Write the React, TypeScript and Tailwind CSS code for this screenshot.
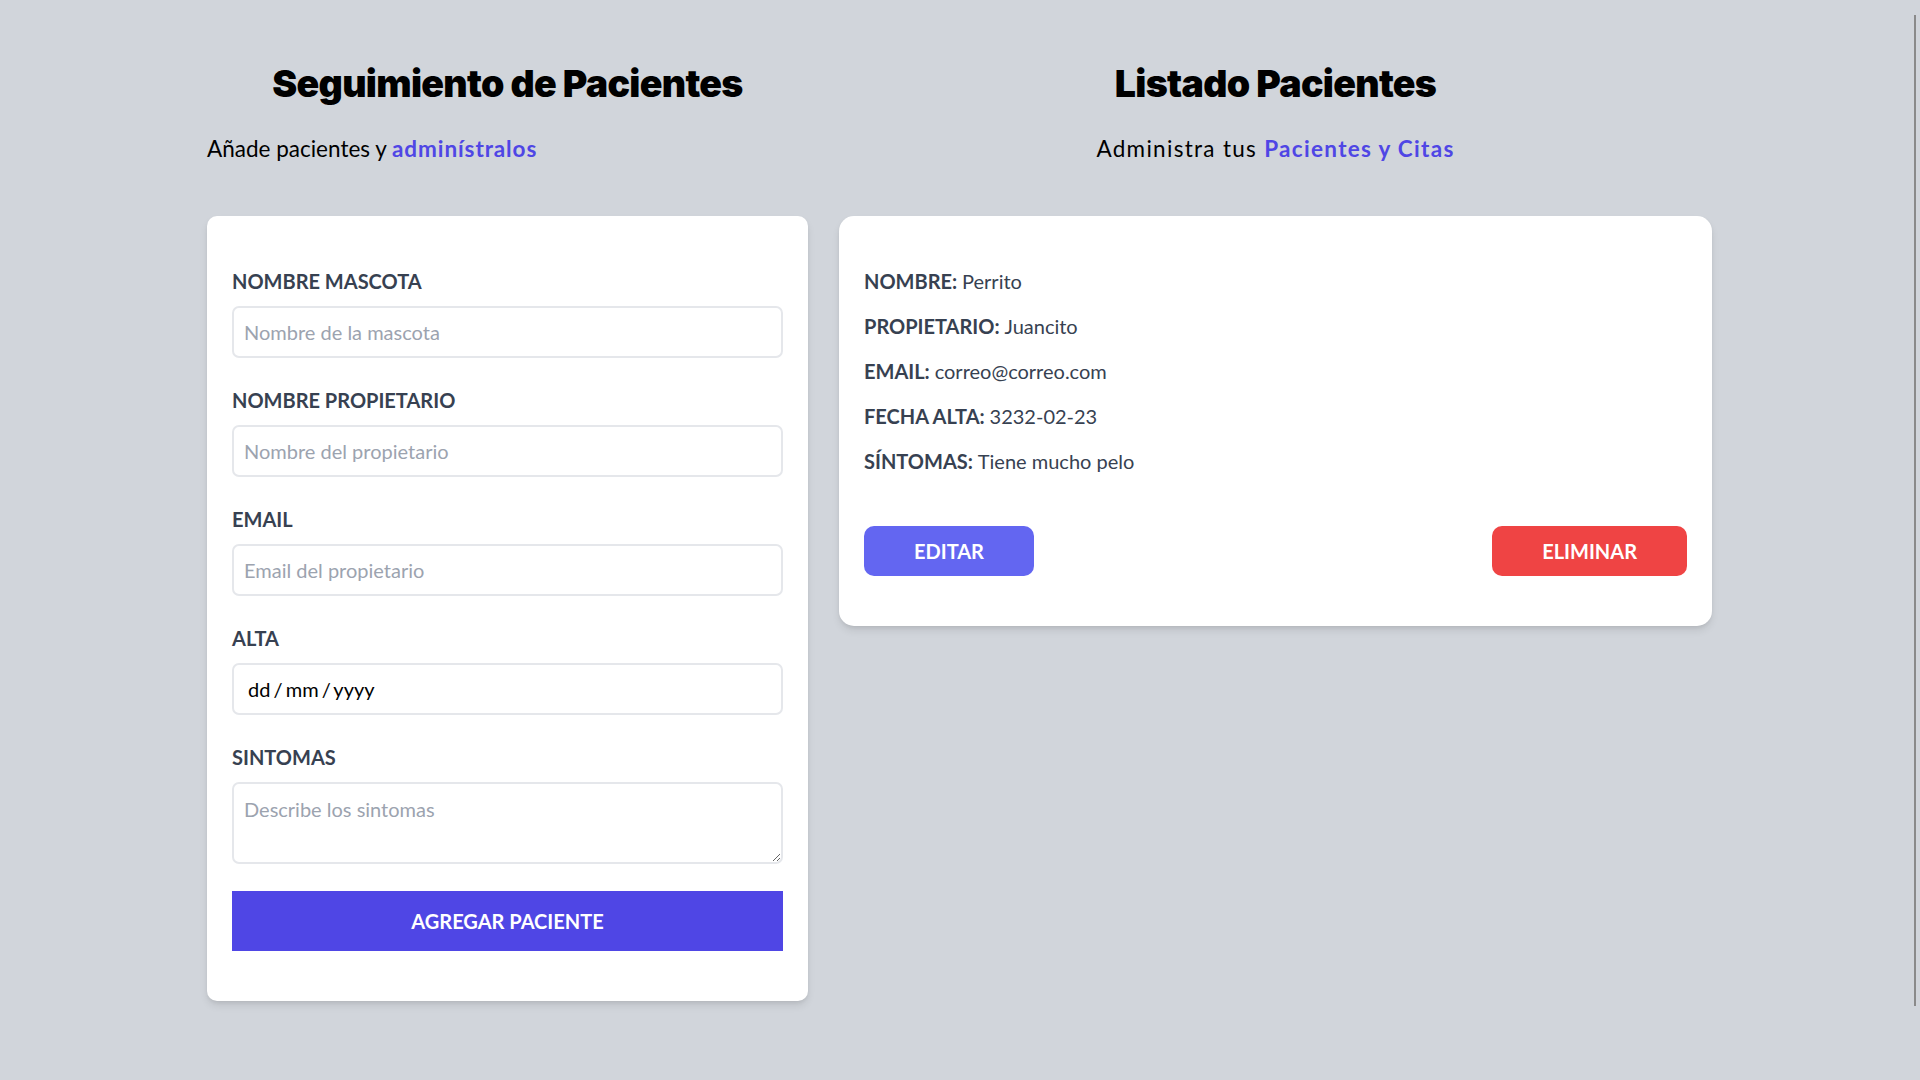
import React from "react";

function Field({ label, children }: { label: string; children: React.ReactNode }) {
  return (
    <div className="mb-[27px]">
      <label className="block text-[20px] leading-[30px] font-bold uppercase text-[#374151]">{label}</label>
      {children}
    </div>
  );
}

const inputCls =
  "mt-[10px] block w-full h-[52px] border-2 border-[#e5e7eb] rounded-[7px] px-[10px] text-[20px] text-black placeholder:text-[#9ca3af] outline-none bg-white";

function Row({ k, v }: { k: string; v: string }) {
  return (
    <p className="mb-[15px] text-[20px] leading-[30px] font-bold uppercase text-[#374151]">
      {k} <span className="font-normal normal-case">{v}</span>
    </p>
  );
}

const titleCls =
  "text-center text-[37.5px] leading-[45px] font-black text-black font-['Inter',sans-serif] tracking-[-0.7px]";

export default function App() {
  return (
    <div className="relative h-screen w-full overflow-hidden bg-[#d1d5db] font-['Lato','Open_Sans',sans-serif]">
      <div className="flex gap-[31px] pl-[207px] pt-[61px]">
        <div className="w-[601px] shrink-0">
          <h2 className={titleCls}>Seguimiento de Pacientes</h2>
          <p className="mt-[25px] text-[22.5px] leading-[35px] text-black">
            Añade pacientes y <span className="font-bold text-[#4f46e5] tracking-[0.9px]">adminístralos</span>
          </p>
          <form className="mt-[50px] rounded-[10px] bg-white px-[25px] py-[50px] shadow-[0_5px_8px_-1px_rgba(0,0,0,0.1),0_2px_5px_-2px_rgba(0,0,0,0.1)]">
            <Field label="Nombre Mascota">
              <input className={inputCls} placeholder="Nombre de la mascota" />
            </Field>
            <Field label="Nombre Propietario">
              <input className={inputCls} placeholder="Nombre del propietario" />
            </Field>
            <Field label="Email">
              <input className={inputCls} placeholder="Email del propietario" />
            </Field>
            <Field label="Alta">
              <div className="mt-[10px] flex h-[52px] w-full items-center rounded-[7px] border-2 border-[#e5e7eb] bg-white pl-[14px] text-[20px] text-black [word-spacing:-2px]">
                dd / mm / yyyy
              </div>
            </Field>
            <Field label="Sintomas">
              <textarea
                className="mt-[10px] block h-[82px] w-full rounded-[7px] border-2 border-[#e5e7eb] px-[10px] py-[10px] text-[20px] leading-[30px] text-black placeholder:text-[#9ca3af] outline-none"
                placeholder="Describe los sintomas"
              />
            </Field>
            <button
              type="button"
              className="block h-[60px] w-full bg-[#4f46e5] text-[20px] leading-[30px] font-bold uppercase text-white"
            >
              Agregar Paciente
            </button>
          </form>
        </div>

        <div className="w-[873px] shrink-0">
          <h2 className={titleCls}>Listado Pacientes</h2>
          <p className="mt-[25px] text-center text-[22.5px] leading-[35px] text-black tracking-[1.3px]">
            Administra tus <span className="font-bold text-[#4f46e5]">Pacientes y Citas</span>
          </p>
          <div className="mt-[50px] rounded-[15px] bg-white px-[25px] py-[50px] shadow-[0_5px_8px_-1px_rgba(0,0,0,0.1),0_2px_5px_-2px_rgba(0,0,0,0.1)]">
            <Row k="Nombre:" v="Perrito" />
            <Row k="Propietario:" v="Juancito" />
            <Row k="Email:" v="correo@correo.com" />
            <Row k="Fecha Alta:" v="3232-02-23" />
            <Row k="Síntomas:" v="Tiene mucho pelo" />
            <div className="mt-[50px] flex justify-between">
              <button
                type="button"
                className="rounded-[10px] bg-[#6366f1] px-[50px] py-[10px] text-[20px] leading-[30px] font-bold uppercase text-white"
              >
                Editar
              </button>
              <button
                type="button"
                className="rounded-[10px] bg-[#ef4444] px-[50px] py-[10px] text-[20px] leading-[30px] font-bold uppercase text-white"
              >
                Eliminar
              </button>
            </div>
          </div>
        </div>
      </div>
      <div className="absolute right-[4px] top-[15px] h-[991px] w-[2px] bg-[#8a8a8a]" />
    </div>
  );
}
